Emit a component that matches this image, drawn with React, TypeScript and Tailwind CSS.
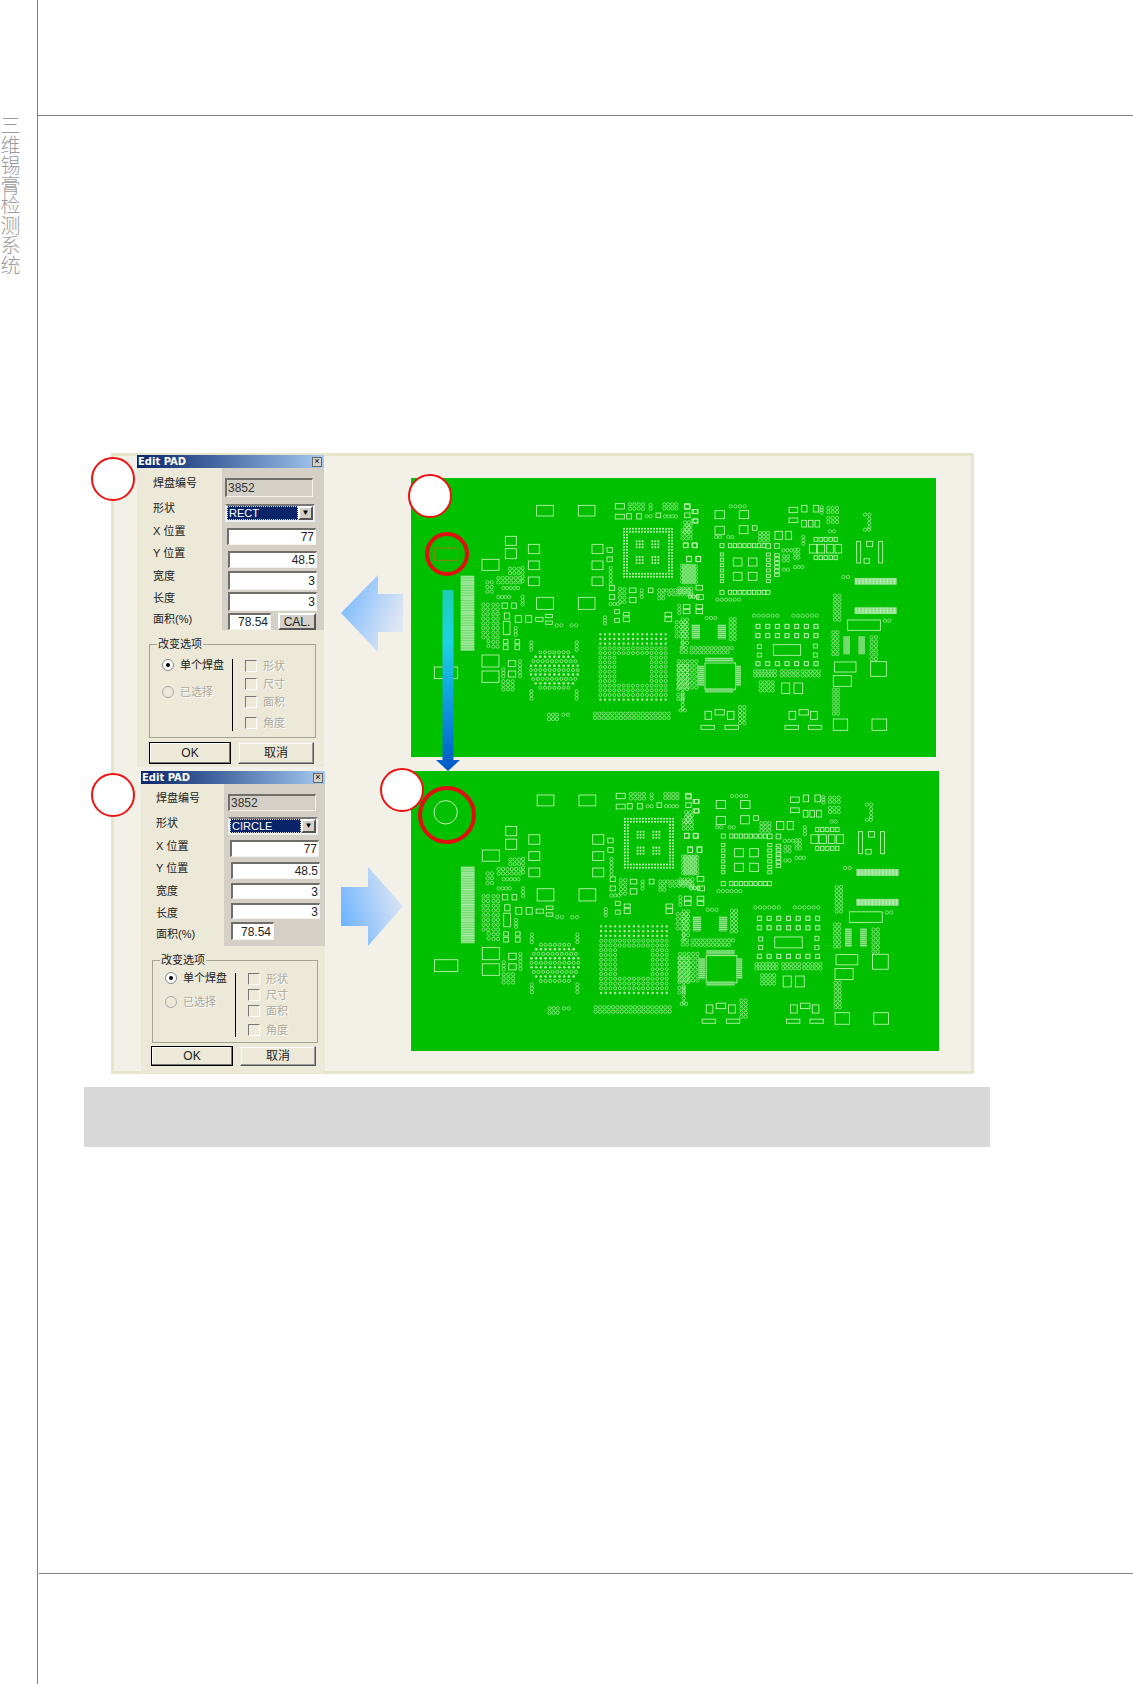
const rectsLeft = [
  [410,137,50,32],[535,137,50,32],[410,413,50,36],[535,413,50,36],
  [316,230,33,27],[316,267,33,30],[246,299,51,33],[385,254,33,28],[385,304,33,26],[385,352,33,26],
  [576,254,33,28],[576,304,33,26],[576,352,33,26],[621,264,16,14],[621,292,16,14],
  [646,132,27,16],[646,164,27,14],[680,162,14,16],[710,162,14,16],[768,160,14,14],[854,132,16,14],[854,160,16,14],[880,150,14,12],[880,178,14,12],
  [628,378,16,14],[628,405,16,14],[688,385,20,14],[688,413,20,16],[745,385,14,14],
  [306,430,16,16],[335,430,14,16],[313,460,16,18],[310,485,20,40],[346,468,18,20],[377,468,18,20],[407,473,22,12],[437,464,20,10],[437,484,20,10],
  [246,586,51,36],[246,634,51,34],[325,603,22,18],[325,634,22,18],
  [644,450,14,12],[644,476,14,12],[670,458,18,10],[670,472,18,14],[795,458,20,12],[795,472,20,14],
  [850,250,14,14],[878,250,14,14],[860,290,14,16],[888,290,14,16],
  [310,540,14,12],[310,556,14,14],[345,540,14,12],[345,556,14,14],
  [103,622,70,35],
];

const dotsLeft = [
  [690,134,4,2,13,13],[752,136,1,2,0,11],[793,134,4,2,12,12],[740,170,2,1,12,0],[795,170,4,1,11,0],[855,188,2,3,12,14],
  [262,368,2,3,13,14],[330,327,3,2,13,13],[368,325,1,4,0,13],[295,355,6,2,13,13],[310,385,5,1,11,0],[295,412,4,1,11,0],[368,412,1,3,0,11],
  [250,435,2,8,13,14],[280,435,2,10,13,14],[265,545,1,2,0,14],
  [632,325,1,5,0,12],[632,433,3,1,11,0],[660,388,2,4,13,13],[725,392,1,3,0,10],[778,392,2,3,12,12],[800,392,6,1,13,0],[808,404,6,1,13,0],
  [470,497,2,1,14,0],[515,497,2,1,14,0],[347,505,1,3,0,10],
  [310,630,1,3,0,10],[360,605,1,5,0,11],[310,665,3,3,14,12],
  [394,548,1,3,0,11],[530,548,1,3,0,11],[394,695,1,3,0,11],[530,695,1,3,0,11],
  [447,765,3,2,12,13],[490,765,2,1,14,0],[585,762,18,2,13,13],[615,473,1,3,0,9],
  [830,488,3,4,13,14],[848,548,1,2,0,13],[845,565,2,2,13,12],
  [852,320,4,5,12,12],[860,198,2,1,12,0],[870,412,3,1,11,0],[838,438,1,3,0,11],
  [835,618,3,6,13,14],[835,705,2,2,13,13],[842,752,2,1,13,0],
];

const rectsRight = [
  [105,153,28,24],[178,153,28,24],[105,200,28,24],[178,198,26,24],[217,198,14,14],[285,215,22,24],[317,215,18,24],
  [258,252,14,14],[284,252,14,14],[160,295,26,24],[205,295,26,24],[160,338,26,24],[205,338,26,24],
  [327,143,26,16],[327,175,26,14],[365,137,16,20],[400,137,16,20],[365,182,14,20],[385,182,14,20],[405,182,14,20],
  [388,254,22,26],[412,254,22,26],[440,254,20,26],[465,254,20,26],
  [530,245,12,65],[596,245,12,65],[560,245,18,16],[552,297,16,14],
  [503,481,98,31],[280,555,82,32],[463,607,65,30],[572,606,47,44],[460,648,54,32],[460,778,43,34],[576,778,44,34],
  [305,670,24,32],[342,670,26,32],[75,610,92,80],
  [232,555,12,12],[232,580,12,12],[400,553,12,12],[400,580,12,12],
  [75,755,20,24],[105,750,28,16],[142,755,20,24],[63,797,40,12],[135,797,40,12],
  [327,755,20,24],[357,750,28,16],[392,755,20,24],[315,797,40,12],[385,797,40,12],
  [10,435,20,12],[10,450,20,12],[48,435,20,12],[48,450,20,12],[48,377,20,14],[50,405,20,14],
  [14,135,16,14],[36,150,16,12],[36,178,16,12],[10,250,14,14],[36,250,14,14],[20,290,14,16],[48,290,14,16],
  [120,252,12,12],[120,392,12,12],[258,392,12,12],
];

const dotsRight = [
  [152,140,4,1,14,0],[425,143,1,3,0,8],[445,145,3,2,13,12],[445,175,3,2,13,12],[555,165,2,1,13,0],[568,178,1,3,0,12],[555,210,2,1,12,0],
  [108,232,2,1,12,0],[145,232,2,1,12,0],[240,220,3,3,12,11],[370,232,1,3,0,10],[450,215,2,1,12,0],
  [310,272,3,1,12,0],[345,270,2,3,10,12],[312,290,2,2,12,12],[345,322,3,1,11,0],[312,330,2,1,12,0],
  [112,420,6,1,13,0],[490,352,2,1,14,0],[615,483,2,1,13,0],
  [465,408,2,7,13,12],[460,518,2,6,12,13],[222,468,6,1,14,0],[340,468,6,1,14,0],
  [225,635,7,2,10,12],[305,635,5,2,12,12],[368,635,5,2,12,12],[242,668,4,3,12,12],
  [80,475,3,1,13,0],[152,478,2,6,12,12],[575,533,2,6,13,13],
  [35,565,11,1,12,0],[35,578,10,1,12,0],[180,742,2,5,13,12],[462,690,2,7,12,12],
  [8,480,2,6,13,14],[-3,605,5,7,13,13],[8,700,1,5,0,12],[8,212,3,3,12,12],[6,318,4,5,12,12],[-2,386,4,2,12,12],[30,410,3,1,11,0],
];

const trace = '#c4f5b8';

function pcbShapes(list: number[][]) {
  return list.map(([x, y, w, h], i) => <rect key={i} x={x} y={y} width={w} height={h} fill="none" strokeWidth={2.5} />);
}

function pcbDots(list: number[][]) {
  const out: React.ReactNode[] = [];
  list.forEach(([x, y, nx, ny, dx, dy], k) => {
    for (let i = 0; i < nx; i++) {
      for (let j = 0; j < ny; j++) {
        out.push(<circle key={`${k}-${i}-${j}`} cx={x + i * dx} cy={y + j * dy} r={5} fill="none" strokeWidth={1.8} />);
      }
    }
  });
  return out;
}

function SmallBga() {
  const out: React.ReactNode[] = [];
  for (let i = 0; i < 17; i++) {
    for (let j = 0; j < 17; j++) {
      if (i < 2 || j < 2 || i >= 15 || j >= 15) {
        out.push(<circle key={`${i}-${j}`} cx={672 + i * 9} cy={207 + j * 9} r={3} fill={trace} stroke="none" />);
      }
    }
  }
  [[710, 245], [757, 245], [710, 292], [757, 292]].forEach(([a, b], k) => {
    for (let i = 0; i < 3; i++) {
      for (let j = 0; j < 3; j++) {
        out.push(<circle key={`c${k}-${i}-${j}`} cx={a + i * 9} cy={b + j * 9} r={3} fill={trace} stroke="none" />);
      }
    }
  });
  return <>{out}</>;
}

function BigBga() {
  const out: React.ReactNode[] = [];
  for (let i = 0; i < 15; i++) {
    for (let j = 0; j < 15; j++) {
      if (i >= 4 && i <= 10 && j >= 5 && j <= 10) continue;
      const solid = j < 3 || j > 13;
      out.push(
        solid
          ? <circle key={`${i}-${j}`} cx={601 + i * 14} cy={524 + j * 14} r={3.4} fill={trace} stroke="none" />
          : <circle key={`${i}-${j}`} cx={601 + i * 14} cy={524 + j * 14} r={4.6} fill="none" strokeWidth={1.8} />
      );
    }
  }
  return <>{out}</>;
}

function MidBga() {
  const widths = [7, 9, 10, 11, 11, 11, 10, 9, 7];
  const out: React.ReactNode[] = [];
  widths.forEach((w, r) => {
    for (let i = 0; i < w; i++) {
      const cx = 463 - ((w - 1) * 14) / 2 + i * 14;
      const cy = 578 + r * 13.3;
      out.push(
        r % 2 === 1
          ? <circle key={`${r}-${i}`} cx={cx} cy={cy} r={3.6} fill={trace} stroke="none" />
          : <circle key={`${r}-${i}`} cx={cx} cy={cy} r={4.6} fill="none" strokeWidth={2} />
      );
    }
  });
  return <>{out}</>;
}

function Connector() {
  return (
    <g>
      <rect x={182} y={348} width={41} height={226} fill="#62d65e" stroke="none" />
      {Array.from({ length: 45 }).map((_, i) => (
        <line key={i} x1={182} x2={223} y1={350 + i * 5} y2={350 + i * 5} stroke={i % 9 === 4 ? '#ffffff' : '#c8f6c0'} strokeWidth={2} />
      ))}
    </g>
  );
}

function Stripes({ x, y }: { x: number; y: number }) {
  return (
    <g>
      <rect x={x} y={y} width={126} height={20} fill="#5cd458" stroke="none" />
      {Array.from({ length: 30 }).map((_, i) => (
        <line key={i} x1={x + 2 + i * 4.2} x2={x + 2 + i * 4.2} y1={y} y2={y + 20} stroke="#e6fbe2" strokeWidth={2} />
      ))}
    </g>
  );
}

function PadStack({ x, y, w, h }: { x: number; y: number; w: number; h: number }) {
  return (
    <g>
      <rect x={x} y={y} width={w} height={h} fill="#44cc44" stroke="none" />
      {Array.from({ length: Math.floor(h / 6) }).map((_, i) => (
        <line key={i} x1={x} x2={x + w} y1={y + 2 + i * 6} y2={y + 2 + i * 6} stroke={trace} strokeWidth={2.2} />
      ))}
    </g>
  );
}

function SquareRows() {
  const out: React.ReactNode[] = [];
  [500, 528, 612].forEach((y, r) => {
    for (let i = 0; i < 7; i++) {
      out.push(<rect key={`${r}-${i}`} x={228 + i * 29} y={y - 6} width={12} height={12} fill="none" strokeWidth={3} />);
    }
  });
  for (let i = 0; i < 8; i++) {
    out.push(<rect key={`t${i}`} x={145 + i * 14.5} y={252} width={10} height={12} fill="none" strokeWidth={2.5} />);
    out.push(<rect key={`b${i}`} x={145 + i * 14.5} y={392} width={10} height={12} fill="none" strokeWidth={2.5} />);
  }
  for (let j = 0; j < 6; j++) {
    out.push(<rect key={`l${j}`} x={121} y={280 + j * 16} width={10} height={9} fill="none" strokeWidth={2.5} />);
    out.push(<rect key={`r${j}`} x={259} y={280 + j * 16} width={12} height={9} fill="none" strokeWidth={2.5} />);
    out.push(<rect key={`s${j}`} x={284} y={282 + j * 12} width={14} height={8} fill="none" strokeWidth={2.5} />);
  }
  for (let i = 0; i < 5; i++) {
    out.push(<rect key={`u${i}`} x={402 + i * 15} y={233} width={10} height={12} fill="none" strokeWidth={2.5} />);
    out.push(<rect key={`v${i}`} x={402 + i * 15} y={288} width={10} height={12} fill="none" strokeWidth={2.5} />);
  }
  return <>{out}</>;
}

function PcbArt({ stretch }: { stretch: string }) {
  return (
    <g stroke={trace} transform={stretch}>
      <g transform="translate(-33 -55)">
        {pcbShapes(rectsLeft)}
        {pcbDots(dotsLeft)}
        <SmallBga />
        <BigBga />
        <MidBga />
        <Connector />
      </g>
      <g transform="translate(807 -55)">
        {pcbShapes(rectsRight)}
        {pcbDots(dotsRight)}
        <SquareRows />
        <Stripes x={524} y={355} />
        <Stripes x={524} y={443} />
        <PadStack x={35} y={495} w={25} h={45} />
        <PadStack x={113} y={495} w={25} h={45} />
        <PadStack x={490} y={530} w={20} h={55} />
        <PadStack x={535} y={530} w={20} h={55} />
        <PadStack x={52} y={618} w={20} h={62} />
        <PadStack x={165} y={618} w={18} h={62} />
        <PadStack x={75} y={594} w={85} h={14} />
        <PadStack x={75} y={686} w={85} h={14} />
      </g>
    </g>
  );
}

type DialogCfg = {
  shape: string;
  area: boolean;
  box: string;
  gray: string;
  labelCol: string;
  fields: string[];
  groupBox: string;
  radioRows: string[];
  checkRows: string[];
  rule: string;
  buttons: string;
};

const labels = [
  ['焊盘编号', 'h-[26px]'],
  ['形状', 'h-[24px]'],
  ['X 位置', 'h-[22px]'],
  ['Y 位置', 'h-[23px]'],
  ['宽度', 'h-[23px]'],
  ['长度', 'h-[21px]'],
  ['面积(%)', 'h-[21px]'],
];

const sunken = 'border-t-2 border-l-2 border-t-[#6f6e68] border-l-[#6f6e68] border-r border-b border-r-[#f4f3ee] border-b-[#f4f3ee]';

function Dialog({ cfg }: { cfg: DialogCfg }) {
  return (
    <section className={`absolute flex flex-col bg-[#ece9d8] text-[11px] text-[#222] ${cfg.box}`}>
      <div className="flex h-[13px] items-center justify-between bg-gradient-to-r from-[#0a246a] to-[#a6caf0] pl-[1px] pr-[2px]">
        <span className="font-['DejaVu_Sans',sans-serif] text-[10px] font-bold leading-none text-white">Edit PAD</span>
        <span className="flex h-[10px] w-[10px] items-center justify-center border border-[#666] bg-[#d4d0c8] text-[9px] leading-none text-black">×</span>
      </div>
      <div className="flex h-[162px]">
        <div className={`flex flex-col ${cfg.labelCol}`}>
          {labels.map(([t, h]) => (
            <div key={t} className={`flex items-center whitespace-nowrap ${h}`}>{t}</div>
          ))}
        </div>
        <div className={`flex flex-1 flex-col bg-[#d4d0c8] ${cfg.gray}`}>
          <div className={`flex w-[88px] items-center bg-[#d4d0c8] pl-[1px] text-[12px] text-[#333] ${sunken} ${cfg.fields[0]}`}>3852</div>
          <div className={`flex w-[90px] items-center border-2 border-t-[#777] border-l-[#eee] border-r-[#eee] border-b-[#eee] bg-white ${cfg.fields[1]}`}>
            <span className="flex h-full flex-1 items-center border border-dotted border-[#ddd] bg-[#0a246a] pl-[1px] text-[11px] text-white">{cfg.shape}</span>
            <span className="flex h-full w-[15px] items-center justify-center border-2 border-t-white border-l-white border-r-[#555] border-b-[#555] bg-[#d4d0c8] text-[8px] leading-none text-black">▼</span>
          </div>
          {['77', '48.5', '3', '3'].map((v, i) => (
            <div key={v + i} className={`ml-[2px] flex w-[89px] items-center justify-end bg-white pr-[1px] text-[12px] ${sunken} ${cfg.fields[i + 2]}`}>{v}</div>
          ))}
          <div className={`ml-[3px] flex items-start ${cfg.fields[6]}`}>
            <div className={`flex h-full w-[43px] items-center justify-end bg-white pr-[2px] text-[12px] ${sunken}`}>78.54</div>
            {cfg.area && (
              <div className="ml-[7px] flex h-[17px] w-[38px] items-center justify-center border-2 border-t-white border-l-white border-r-[#555] border-b-[#555] bg-[#d4d0c8] text-[12px]">CAL.</div>
            )}
          </div>
        </div>
      </div>
      <div className={`relative mt-[14px] flex border border-[#a5a393] ${cfg.groupBox}`}>
        <span className="absolute -top-[8px] left-[7px] bg-[#ece9d8] px-[1px] leading-[14px]">改变选项</span>
        <div className="flex w-[82px] flex-col pl-[12px]">
          <div className={`flex h-[20px] items-center gap-[6px] whitespace-nowrap ${cfg.radioRows[0]}`}>
            <span className="flex h-[12px] w-[12px] items-center justify-center rounded-full border border-[#888] bg-white">
              <span className="h-[4px] w-[4px] rounded-full bg-black" />
            </span>
            单个焊盘
          </div>
          <div className={`flex h-[20px] items-center gap-[6px] whitespace-nowrap text-[#aca899] [text-shadow:1px_1px_0_#fff] ${cfg.radioRows[1]}`}>
            <span className="h-[12px] w-[12px] rounded-full border border-[#aaa] bg-[#ece9d8]" />
            已选择
          </div>
        </div>
        <div className={`w-px bg-black ${cfg.rule}`} />
        <div className="flex flex-col pl-[12px] text-[#aca899] [text-shadow:1px_1px_0_#fff]">
          {['形状', '尺寸', '面积', '角度'].map((t, i) => (
            <div key={t} className={`flex h-[14px] items-center gap-[6px] ${cfg.checkRows[i]}`}>
              <span className="h-[12px] w-[12px] border border-[#777] border-r-white border-b-white bg-[#ece9d8]" />
              {t}
            </div>
          ))}
        </div>
      </div>
      <div className={`flex gap-[7px] text-[12px] ${cfg.buttons}`}>
        <div className="flex w-[82px] items-center justify-center border border-black bg-[#ece9d8] shadow-[inset_-1px_-1px_0_#777,inset_1px_1px_0_#fff]">OK</div>
        <div className="flex w-[76px] items-center justify-center border border-[#ece9d8] border-r-[#555] border-b-[#555] bg-[#ece9d8] shadow-[inset_-1px_-1px_0_#999,inset_1px_1px_0_#fff]">取消</div>
      </div>
    </section>
  );
}

const rectDialog: DialogCfg = {
  shape: 'RECT',
  area: true,
  box: 'left-[23px] -top-[1px] h-[312px] w-[187px]',
  labelCol: 'w-[85px] pl-[16px] pt-[2px]',
  gray: 'pl-[3px]',
  fields: ['mt-[10px] h-[19px]', 'mt-[7px] h-[18px]', 'mt-[6px] h-[17px]', 'mt-[6px] ml-[3px] h-[17px]', 'mt-[3px] ml-[3px] h-[19px]', 'mt-[2px] ml-[3px] h-[19px]', 'mt-[2px] h-[17px]'],
  groupBox: 'ml-[12px] h-[94px] w-[167px]',
  radioRows: ['mt-[10px]', 'mt-[7px]'],
  checkRows: ['mt-[14px]', 'mt-[4px]', 'mt-[4px]', 'mt-[7px]'],
  rule: 'mt-[14px] h-[72px]',
  buttons: 'ml-[12px] mt-[4px] h-[22px]',
};

const circleDialog: DialogCfg = {
  shape: 'CIRCLE',
  area: false,
  box: 'left-[27px] top-[315px] h-[302px] w-[184px]',
  labelCol: 'w-[83px] pl-[15px] pt-[1px]',
  gray: 'pl-[4px]',
  fields: ['mt-[10px] h-[17px]', 'mt-[6px] h-[18px]', 'mt-[5px] h-[17px]', 'mt-[5px] ml-[3px] h-[17px]', 'mt-[4px] ml-[3px] h-[16px]', 'mt-[4px] ml-[3px] h-[16px]', 'mt-[3px] h-[18px]'],
  groupBox: 'ml-[11px] h-[83px] w-[166px]',
  radioRows: ['mt-[7px]', 'mt-[4px]'],
  checkRows: ['mt-[11px]', 'mt-[2px]', 'mt-[2px]', 'mt-[5px]'],
  rule: 'mt-[12px] h-[64px]',
  buttons: 'ml-[10px] mt-[3px] h-[20px]',
};

export default function App() {
  return (
    <div className="flex h-[1684px] w-[1133px] overflow-hidden bg-white font-['Liberation_Sans','Noto_Sans_CJK_SC',sans-serif]">
      {/* Side rail */}
      <aside className="flex w-[38px] flex-col border-r border-[#808080] pt-[115px]">
        <div className="w-[20px] font-['Noto_Sans_CJK_SC',sans-serif] text-[20px] font-light leading-[20px] text-[#9a9a9a] [writing-mode:vertical-rl]">
          三维锡膏检测系统
        </div>
      </aside>

      <div className="flex flex-1 flex-col">
        <header className="h-[116px] border-b border-[#808080]" />

        <main className="ml-px h-[1458px] border-b border-[#808080]">
          {/* Figure */}
          <div className="relative ml-[72px] mt-[337px] h-[621px] w-[863px] border-[3px] border-[#e6e5cc] bg-[#f3f0e8]">
            <Dialog cfg={rectDialog} />
            <Dialog cfg={circleDialog} />

            <svg viewBox="0 0 1575 837" className="absolute left-[297px] top-[22px] h-[279px] w-[525px] bg-[#00c000]">
              <PcbArt stretch="" />
              <rect x={70} y={210} width={70} height={37} fill="none" stroke="#9a7a10" strokeWidth={3} />
            </svg>
            <svg viewBox="0 0 1584 840" className="absolute left-[297px] top-[315px] h-[280px] w-[528px] bg-[#00c000]">
              <PcbArt stretch="translate(0 -11.6) scale(1.004 1.019)" />
              <circle cx={104} cy={124} r={35} fill="none" stroke={trace} strokeWidth={3} />
            </svg>

            {/* Arrows */}
            <svg viewBox="0 0 62 77" className="absolute left-[227px] top-[119px] h-[77px] w-[62px]">
              <defs>
                <linearGradient id="arrowLeft" x1="0" y1="0" x2="1" y2="0.5">
                  <stop offset="0" stopColor="#6db4ff" />
                  <stop offset="1" stopColor="#dfe6f4" />
                </linearGradient>
              </defs>
              <path d="M0 38 L37 0 V19 H62 V57 H37 V77 Z" fill="url(#arrowLeft)" />
            </svg>
            <svg viewBox="0 0 62 79" className="absolute left-[227px] top-[411px] h-[79px] w-[62px]">
              <defs>
                <linearGradient id="arrowRight" x1="0" y1="0.7" x2="1" y2="0.3">
                  <stop offset="0" stopColor="#6db4ff" />
                  <stop offset="1" stopColor="#e2e7f2" />
                </linearGradient>
              </defs>
              <path d="M0 20 H27 V0 L62 39 L27 79 V59 H0 Z" fill="url(#arrowRight)" />
            </svg>
            <svg viewBox="0 0 24 181" className="absolute left-[322px] top-[134px] h-[181px] w-[24px]">
              <defs>
                <linearGradient id="arrowDown" x1="0" y1="0" x2="0" y2="1">
                  <stop offset="0" stopColor="#1ccfb4" />
                  <stop offset="0.28" stopColor="#20d2e2" />
                  <stop offset="0.65" stopColor="#0e96e0" />
                  <stop offset="1" stopColor="#0058c4" />
                </linearGradient>
              </defs>
              <path d="M6.5 0 H17.5 V170 H24 L12 181 L0 170 H6.5 Z" fill="url(#arrowDown)" />
            </svg>

            {/* Callout circles */}
            <span className="absolute -left-[23px] top-[1px] h-[44px] w-[44px] rounded-full border-2 border-[#f01010] bg-white" />
            <span className="absolute -left-[23px] top-[317px] h-[44px] w-[44px] rounded-full border-2 border-[#f01010] bg-white" />
            <span className="absolute left-[294px] top-[18px] h-[44px] w-[44px] rounded-full border-2 border-[#f01010] bg-white" />
            <span className="absolute left-[266px] top-[312px] h-[44px] w-[44px] rounded-full border-2 border-[#f01010] bg-white" />
            <span className="absolute left-[311px] top-[76px] h-[44px] w-[44px] rounded-full border-[4px] border-[#e01010]" />
            <span className="absolute left-[304px] top-[330px] h-[58px] w-[58px] rounded-full border-[4px] border-[#e01010]" />
          </div>

          {/* Caption bar */}
          <div className="ml-[45px] mt-[13px] h-[60px] w-[906px] bg-[#d8d8d8]" />
        </main>
      </div>
    </div>
  );
}
